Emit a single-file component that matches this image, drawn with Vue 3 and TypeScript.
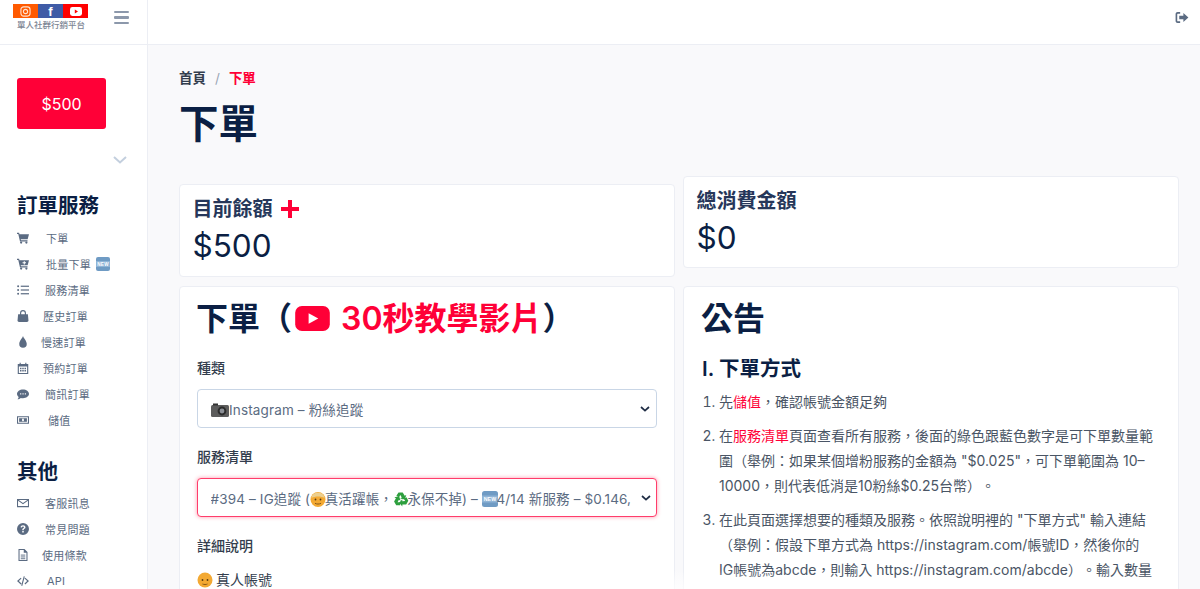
<template>
  <div class="page" lang="zh-TW">
    <aside class="sidebar">
      <div class="brand">
        <div class="logo">
          <div class="logo-top">
            <span class="logo-cell ig">
              <svg width="11" height="11" viewBox="0 0 12 12" fill="none" stroke="#ffe3d0" stroke-width="1.2"><rect x="1" y="1" width="10" height="10" rx="3" /><circle cx="6" cy="6" r="2.3" /></svg>
            </span>
            <span class="logo-cell fb">f</span>
            <span class="logo-cell yt">
              <svg width="12" height="9" viewBox="0 0 12 9"><rect width="12" height="9" rx="2.4" fill="#fff" /><path d="M4.8 2.4 8 4.5 4.8 6.6z" fill="#f00" /></svg>
            </span>
          </div>
          <div class="logo-text">單人社群行銷平台</div>
        </div>
        <div class="bars"><i></i><i></i><i></i></div>
      </div>

      <div class="balance-btn">$500</div>
      <div class="chevron-row">
        <svg width="14" height="8" viewBox="0 0 14 8" fill="none" stroke="#c3cfde" stroke-width="2"><path d="M1 1l6 5.5L13 1" /></svg>
      </div>

      <h3 class="nav-title">訂單服務</h3>
      <ul class="nav">
        <li v-for="item in orderNav" :key="item.label">
          <svg class="nav-icon" viewBox="0 0 16 16" v-html="item.icon"></svg>
          <span class="nav-label" :style="{ marginLeft: item.left + 'px' }">{{ item.label }}</span>
          <svg v-if="item.isNew" class="new-badge" viewBox="0 0 14 14">
            <rect width="14" height="14" rx="2" fill="#6f9bc4" />
            <rect x="0" y="4" width="14" height="6" fill="#8fb4d6" />
            <text x="7" y="9" text-anchor="middle" font-size="4.6" font-weight="700" fill="#fff" font-family="Liberation Sans">NEW</text>
          </svg>
        </li>
      </ul>

      <h3 class="nav-title second">其他</h3>
      <ul class="nav">
        <li v-for="item in otherNav" :key="item.label">
          <svg class="nav-icon" viewBox="0 0 16 16" v-html="item.icon"></svg>
          <span class="nav-label" :style="{ marginLeft: item.left + 'px' }">{{ item.label }}</span>
        </li>
      </ul>
    </aside>

    <div class="right">
      <header class="topbar">
        <svg width="14" height="11" viewBox="0 0 14 12" fill="#5b6b82">
          <path d="M8.5 1v3H4v4h4.500v3L14 6z" />
          <path d="M0 2.200C0 1 1 0 2.200 0H5v1.800H2.400c-.4 0-.6.200-.6.600v7.200c0 .4.200.6.600.6H5V12H2.200C1 12 0 11 0 9.800z" />
        </svg>
      </header>

      <main class="content">
        <div class="breadcrumb">
          <span class="crumb">首頁</span>
          <span class="sep">/</span>
          <span class="crumb active">下單</span>
        </div>
        <h1 class="page-title">下單</h1>

        <div class="columns">
          <div class="col col-left">
            <section class="card stat">
              <h4 class="stat-title">目前餘額 <span class="plus"></span></h4>
              <div class="stat-value">$500</div>
            </section>

            <section class="card form-card">
              <h2 class="card-heading">
                下單（<svg class="yt-icon" viewBox="0 0 36 26"><rect width="36" height="26" rx="7" fill="#ff0037" /><path d="M14 7.5 24 13l-10 5.5z" fill="#fff" /></svg><span class="accent">30秒教學影片</span>）
              </h2>

              <label class="field-label">種類</label>
              <div class="select">
                <span class="select-text">
                  <svg class="emoji" viewBox="0 0 18 16">
                    <rect x="0" y="3" width="18" height="12" rx="1.5" fill="#5c5c5c" />
                    <rect x="2" y="1.5" width="5" height="2" fill="#333" />
                    <circle cx="11" cy="9" r="4.4" fill="#2b2b2b" />
                    <circle cx="11" cy="9" r="2.4" fill="#8b8f96" />
                  </svg>Instagram – 粉絲追蹤
                </span>
                <svg class="caret" viewBox="0 0 10 6" fill="none" stroke="#1f2d45" stroke-width="1.7"><path d="M1 1l4 3.6L9 1" /></svg>
              </div>

              <label class="field-label second">服務清單</label>
              <div class="select focused">
                <span class="select-text">#394 – IG追蹤 (<svg class="emoji face" viewBox="0 0 16 16">
                    <circle cx="8" cy="8.5" r="7.5" fill="#f3a933" />
                    <path d="M1.500 7c0-7 13-7 13 0-3-2-10-2-13 0z" fill="#eccf8f" />
                    <circle cx="5.500" cy="8.500" r=".9" fill="#5a3a10" /><circle cx="10.500" cy="8.500" r=".9" fill="#5a3a10" />
                    <path d="M5 12.300c2 1 4 1 6 0" stroke="#8a5a18" fill="none" />
                  </svg>真活躍帳，<svg class="emoji face" viewBox="0 0 16 16" fill="#2e9f3e">
                    <path d="M5.500 1.500h4.200l2 3.300 1.600-.9-1.500 4.600-4.700-1 1.700-1-1.500-2.400-1.300 2.200-2.600-1.500z" />
                    <path transform="rotate(120 8 8.500)" d="M5.500 1.500h4.200l2 3.300 1.600-.9-1.500 4.600-4.700-1 1.700-1-1.500-2.400-1.300 2.200-2.600-1.500z" />
                    <path transform="rotate(240 8 8.500)" d="M5.500 1.500h4.200l2 3.300 1.600-.9-1.500 4.600-4.700-1 1.700-1-1.500-2.400-1.300 2.200-2.600-1.500z" />
                  </svg>永保不掉) – <svg class="emoji face" viewBox="0 0 16 16">
                    <rect width="16" height="16" rx="2.500" fill="#6f9bc4" />
                    <rect y="4.500" width="16" height="7" fill="#8fb4d6" />
                    <text x="8" y="10.300" text-anchor="middle" font-size="5.200" font-weight="700" fill="#fff" font-family="Liberation Sans">NEW</text>
                  </svg>4/14 新服務 – $0.146,
                </span>
                <svg class="caret" viewBox="0 0 10 6" fill="none" stroke="#1f2d45" stroke-width="1.7"><path d="M1 1l4 3.6L9 1" /></svg>
              </div>

              <label class="field-label third">詳細說明</label>
              <p class="detail">
                <svg class="emoji big" viewBox="0 0 16 16">
                  <circle cx="8" cy="8" r="7.500" fill="#f3a933" />
                  <circle cx="5.500" cy="8" r=".9" fill="#5a3a10" /><circle cx="10.500" cy="8" r=".9" fill="#5a3a10" />
                  <path d="M5.500 12c1.500.7 3.500.7 5 0" stroke="#8a5a18" fill="none" />
                </svg>真人帳號
              </p>
            </section>
          </div>

          <div class="col col-right">
            <section class="card stat total">
              <h4 class="stat-title">總消費金額</h4>
              <div class="stat-value">$0</div>
            </section>

            <section class="card notice">
              <h2 class="card-heading">公告</h2>
              <h3 class="notice-sub">I. 下單方式</h3>
              <ol class="steps">
                <li>先<span class="accent">儲值</span>，確認帳號金額足夠</li>
                <li>在<span class="accent">服務清單</span>頁面查看所有服務，後面的綠色跟藍色數字是可下單數量範圍（舉例：如果某個增粉服務的金額為 "$0.025"，可下單範圍為 10–10000，則代表低消是10粉絲$0.25台幣）。</li>
                <li>在此頁面選擇想要的種類及服務。依照說明裡的 "下單方式" 輸入連結（舉例：假設下單方式為 https://instagram.com/帳號ID，然後你的<span class="nowrap">IG帳號為abcde</span>，則輸入 https://instagram.com/abcde）。輸入數量</li>
              </ol>
            </section>
          </div>
        </div>
      </main>
    </div>
    <div class="bottom-fade"></div>
  </div>
</template>

<script setup lang="ts">
interface NavItem {
  label: string
  icon: string
  left: number
  isNew?: boolean
}

const cart = '<path d="M0 1h2.800l.5 2H16l-1.800 6.500H5l.3 1.500H14v1.500H4L1.700 2.500H0z"/><circle cx="5.500" cy="14" r="1.500"/><circle cx="12.500" cy="14" r="1.500"/>'
const cartPlus = '<path d="M0 1h2.800l.5 2H16l-1.800 6.500H5l.3 1.500H14v1.500H4L1.700 2.500H0z"/><path d="M9 4.200h1.400v1.500H12v1.400h-1.600v1.500H9V7.100H7.400V5.700H9z" fill="#fff"/><circle cx="5.500" cy="14" r="1.500"/><circle cx="12.500" cy="14" r="1.500"/>'
const list = '<circle cx="1.500" cy="3" r="1.300"/><circle cx="1.500" cy="8" r="1.300"/><circle cx="1.500" cy="13" r="1.300"/><rect x="5" y="2.200" width="11" height="1.600"/><rect x="5" y="7.200" width="11" height="1.600"/><rect x="5" y="12.200" width="11" height="1.600"/>'
const bag = '<path d="M1.500 5.500h13l.8 8.500c0 1-.8 2-2 2H2.700c-1.200 0-2-1-2-2z"/><path d="M4.800 7V4a3.200 3.200 0 0 1 6.400 0v3" fill="none" stroke="currentColor" stroke-width="1.500"/>'
const drop = '<path d="M8 0c.6 2.600 5 6.500 5 10.500A5 5 0 0 1 3 10.500C3 6.500 7.400 2.600 8 0z"/>'
const calendar = '<path d="M1 2.500h2.500V1h1.500v1.500h6V1h1.500v1.500H15V16H1zM2.500 6v8.500h11V6z" fill-rule="evenodd"/><path d="M4 7.500h2v2H4zM7 7.500h2v2H7zM10 7.500h2v2h-2zM4 10.500h2v2H4zM7 10.500h2v2H7zM10 10.500h2v2h-2z"/>'
const sms = '<path d="M8 2c4.400 0 8 2.500 8 5.800s-3.600 5.800-8 5.800c-1 0-2-.1-2.900-.4C3.900 14.200 2.200 15 .6 15c.9-.9 1.500-2 1.600-3C.8 11 0 9.500 0 7.800 0 4.500 3.600 2 8 2z"/><path d="M4.200 7h1.500v1.500H4.200zM7.300 7h1.500v1.500H7.300zM10.400 7h1.500v1.500h-1.500z" fill="#fff"/>'
const money = '<path d="M0 3h16v10H0zM1.400 4.400v7.200h13.200V4.400z" fill-rule="evenodd"/><rect x="2.800" y="5.600" width="10.400" height="4.800"/><ellipse cx="8" cy="8" rx="1.300" ry="1.900" fill="#fff"/>'
const mail = '<path d="M0 2.500h16v11H0zM1.400 5v7.100h13.200V5L8 9.700zM2.300 3.900 8 8l5.700-4.100z" fill-rule="evenodd"/>'
const question = '<path d="M8 0a8 8 0 1 1 0 16A8 8 0 0 1 8 0zM7 10.800v2h2v-2zM8 3C6.100 3 4.900 4 4.700 5.700l1.900.3c.1-.8.600-1.300 1.400-1.300s1.300.4 1.300 1c0 .5-.3.800-1 1.300C7.400 7.500 7 8.100 7 9.500h2c0-.9.200-1.100 1-1.700.9-.6 1.300-1.300 1.300-2.200C11.300 4 10 3 8 3z" fill-rule="evenodd"/>'
const file = '<path d="M2 0h8l4 4v12H2zM3.400 1.400v13.200h9.200V5H9V1.400z" fill-rule="evenodd"/><rect x="5" y="7.500" width="6" height="1.200"/><rect x="5" y="10" width="6" height="1.200"/><rect x="5" y="12.400" width="6" height="1.200"/>'
const code = '<path d="M5 3.500 0 8l5 4.500 1-1.200L2.500 8 6 4.700zM11 3.500 16 8l-5 4.500-1-1.200L13.500 8 10 4.700zM9 1.500l1.400.4L7 14.500l-1.400-.4z"/>'

const orderNav: NavItem[] = [
  { label: '下單', icon: cart, left: 17 },
  { label: '批量下單', icon: cartPlus, left: 17, isNew: true },
  { label: '服務清單', icon: list, left: 16 },
  { label: '歷史訂單', icon: bag, left: 14 },
  { label: '慢速訂單', icon: drop, left: 12 },
  { label: '預約訂單', icon: calendar, left: 14 },
  { label: '簡訊訂單', icon: sms, left: 16 },
  { label: '儲值', icon: money, left: 19 },
]

const otherNav: NavItem[] = [
  { label: '客服訊息', icon: mail, left: 16 },
  { label: '常見問題', icon: question, left: 16 },
  { label: '使用條款', icon: file, left: 13 },
  { label: 'API', icon: code, left: 18 },
]
</script>

<style>
html,
body {
  margin: 0;
  height: 100%;
  overflow: hidden;
}
</style>

<style scoped>
.page {
  display: flex;
  height: 589px;
  overflow: hidden;
  position: relative;
  background: #f9f9fb;
  color: #0b1f44;
  font-family: Inter, "Noto Sans CJK TC", sans-serif;
  text-spacing-trim: space-all;
}

.sidebar {
  width: 147px;
  flex-shrink: 0;
  background: #fff;
  border-right: 1px solid #eceef4;
}

.brand {
  display: flex;
  height: 45px;
  box-sizing: border-box;
  border-bottom: 1px solid #eceef4;
  padding: 4px 18px 0 13px;
  justify-content: space-between;
}

.logo {
  width: 75px;
}

.logo-top {
  display: flex;
  height: 14px;
}

.logo-cell {
  flex: 1;
  display: flex;
  align-items: center;
  justify-content: center;
}

.ig {
  background: #ff5a00;
}

.fb {
  background: #3f5ba6;
  color: #fff;
  font: 700 13px "Liberation Sans", sans-serif;
}

.yt {
  background: #ff0000;
}

.logo-text {
  font-size: 8.500px;
  font-weight: 500;
  line-height: 12px;
  margin-top: 1px;
  padding-left: 4px;
  color: #7c8594;
  white-space: nowrap;
}

.bars {
  display: flex;
  flex-direction: column;
  gap: 3px;
  margin-top: 7px;
}

.bars i {
  display: block;
  width: 15px;
  height: 2.400px;
  background: #8c98ab;
  border-radius: 1px;
}

.balance-btn {
  margin: 33px 0 0 17px;
  width: 89px;
  height: 51px;
  border-radius: 3px;
  background: #ff0037;
  color: #fff;
  font-size: 16px;
  display: flex;
  align-items: center;
  justify-content: center;
}

.chevron-row {
  display: flex;
  justify-content: flex-end;
  padding-right: 20px;
  margin-top: 27px;
  height: 8px;
}

.nav-title {
  margin: 30px 0 0 17px;
  font-size: 20.500px;
  line-height: 24px;
  font-weight: 600;
  color: #0b1f44;
}

.nav-title.second {
  margin-top: 27px;
}

.nav {
  list-style: none;
  margin: 6.500px 0 0;
  padding: 0 0 0 17px;
}

.nav li {
  height: 26px;
  display: flex;
  align-items: center;
  font-size: 11px;
  letter-spacing: 0.25px;
  color: #5b6b82;
  white-space: nowrap;
}

.nav-icon {
  width: 12px;
  height: 12px;
  fill: #5b6b82;
  color: #5b6b82;
  flex-shrink: 0;
}

.new-badge {
  width: 14px;
  height: 14px;
  margin-left: 5px;
}

.right {
  flex: 1;
  min-width: 0;
}

.topbar {
  height: 45px;
  box-sizing: border-box;
  background: #fff;
  border-bottom: 1px solid #eceef4;
  display: flex;
  align-items: flex-start;
  justify-content: flex-end;
  padding: 12px 11px 0 0;
}

.content {
  padding: 24px 21px 0 31px;
}

.breadcrumb {
  display: flex;
  align-items: center;
  font-size: 13.500px;
  line-height: 18px;
  font-weight: 600;
  color: #333d4d;
}

.sep {
  margin: 0 9px;
  color: #9aa5b5;
  font-weight: 400;
}

.crumb.active {
  color: #ff0037;
}

.page-title {
  margin: 13px 0 0;
  font-size: 39.500px;
  line-height: 48px;
  font-weight: 600;
  color: #0b1f44;
}

.columns {
  display: flex;
  gap: 8px;
  margin-top: 28px;
}

.col {
  flex: 1;
  min-width: 0;
}

.col-left {
  padding-top: 8px;
}

.card {
  background: #fff;
  border: 1px solid #eceef4;
  border-radius: 4px;
  box-sizing: border-box;
}

.stat {
  height: 93px;
  padding: 11px 13px 11px 12.500px;
}

.stat.total {
  height: 92px;
  margin-bottom: 18px;
}

.stat-title {
  margin: 0;
  font-size: 20px;
  line-height: 26px;
  font-weight: 600;
  color: #26375a;
  display: flex;
  align-items: center;
  gap: 8px;
}

.plus {
  width: 18px;
  height: 18px;
  background:
    linear-gradient(#ff0037, #ff0037) center / 18px 4px no-repeat,
    linear-gradient(#ff0037, #ff0037) center / 4px 18px no-repeat;
}

.stat-value {
  font-size: 31.500px;
  line-height: 40px;
  margin-top: 4px;
  color: #0b1f44;
}

.col-left .card.form-card {
  margin-top: 9px;
}

.form-card {
  padding: 10px 17px 0;
  height: 400px;
}

.notice {
  padding: 10px 18px 0;
  height: 400px;
}

.card-heading {
  margin: 0 0 0 -1px;
  font-size: 32px;
  line-height: 44px;
  font-weight: 600;
  color: #0b1f44;
  white-space: nowrap;
}

.yt-icon {
  width: 35px;
  height: 25px;
  vertical-align: -1px;
  margin-left: 3px;
  margin-right: 11px;
}

.accent {
  color: #ff0037;
}

.nowrap {
  white-space: nowrap;
}

.field-label {
  display: block;
  margin-top: 17px;
  font-size: 14px;
  line-height: 20px;
  font-weight: 500;
  color: #333d4d;
}

.field-label.second,
.field-label.third {
  margin-top: 19px;
}

.select {
  margin-top: 11px;
  height: 39px;
  box-sizing: border-box;
  border: 1px solid #c9d6e6;
  border-radius: 4px;
  padding: 0 6px 0 13px;
  display: flex;
  align-items: center;
  font-size: 13.500px;
  letter-spacing: 0.15px;
  color: #5b6b82;
  background: #fff;
}

.select.focused {
  border: 1.500px solid #ff3d6b;
  padding-left: 12.500px;
  padding-right: 5.500px;
  box-shadow: 0 0 4px rgba(255, 0, 55, 0.4);
}

.select-text {
  flex: 1;
  min-width: 0;
  white-space: nowrap;
  overflow: hidden;
}

.emoji {
  width: 18px;
  height: 16px;
  vertical-align: -3px;
}

.emoji.face {
  width: 16px;
  height: 16px;
  margin: 0 -1.500px 0 0;
}

.emoji.big {
  width: 16px;
  height: 16px;
  margin-right: 3px;
}

.caret {
  width: 10px;
  height: 6px;
  flex-shrink: 0;
  margin-left: 8px;
}

.detail {
  margin: 14px 0 0;
  font-size: 14px;
  line-height: 20px;
  color: #333d4d;
}

.notice-sub {
  margin: 15px 0 0;
  font-size: 20.500px;
  line-height: 26px;
  font-weight: 600;
  color: #0b1f44;
}

.steps {
  margin: 7px 0 0;
  padding: 0 0 0 17px;
  font-size: 14px;
  line-height: 25px;
  color: #4a5565;
}

.steps li {
  margin-bottom: 9px;
}

.bottom-fade {
  position: absolute;
  left: 230px;
  bottom: 0;
  width: 720px;
  height: 20px;
  background: radial-gradient(ellipse 50% 100% at 50% 100%, rgba(255, 255, 255, 0.9), rgba(255, 255, 255, 0));
  pointer-events: none;
}
</style>
